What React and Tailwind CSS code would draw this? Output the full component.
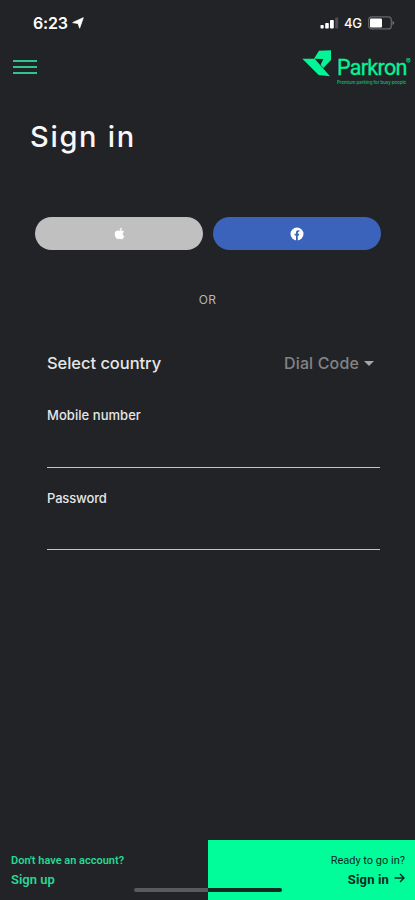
// src/App.jsx

import React, { useState } from 'react';
import { FaApple } from 'react-icons/fa';

const StatusBar = () => (
	<div className="flex h-[46px] items-center justify-between pl-[33px] pr-[20px] text-white">
		<div className="flex items-center gap-[4px]">
			<span className="w-[35px] whitespace-nowrap text-[16px] font-semibold leading-none tracking-[-0.2px]">6:23</span>
			<svg className="h-[12px] w-[12px]" viewBox="0 0 12 12" fill="currentColor">
				<path d="M11.3 0.7 L7.6 11.2 L6.2 6.6 L0.7 5.6 Z" stroke="currentColor" strokeWidth="0.8" strokeLinejoin="round" />
			</svg>
		</div>
		<div className="flex items-center">
			<svg className="h-[12px] w-[19px]" viewBox="0 0 19 12" fill="currentColor">
				<rect x="0.5" y="8" width="3.2" height="3.5" rx="0.8" />
				<rect x="5.2" y="6" width="3.6" height="5.5" rx="0.8" />
				<rect x="10" y="3" width="3.8" height="8.5" rx="0.8" />
				<rect x="15.2" y="0.5" width="3" height="11" rx="0.8" opacity="0.2" />
			</svg>
			<span className="ml-[5px] w-[18px] whitespace-nowrap text-[13px] font-medium leading-none tracking-[-0.2px]">4G</span>
			<svg className="ml-[6px] h-[14px] w-[27px]" viewBox="0 0 27 14" fill="none">
				<rect x="0.7" y="0.9" width="22.6" height="12" rx="3" stroke="#66676a" strokeWidth="1.2" />
				<rect x="2" y="2.4" width="12" height="9" rx="1.2" fill="#fff" />
				<path d="M24.5 4.5 L26.4 7 L24.5 9.5 Z" fill="#77787b" />
			</svg>
		</div>
	</div>
);

const Logo = () => (
	<div className="flex text-[#04f597]">
		<svg className="h-[27px] w-[30px] shrink-0" viewBox="0 0 90 81" fill="currentColor">
			<path d="M1 26 L38 26 L84 79 L50 75 Z" />
			<path d="M36 26 L51 2 L87 1 L87 30 L64 54 L56 44 L64 27 Z" />
		</svg>
		<div className="ml-[5px] mt-[5px] w-[77px]">
			<div className="flex whitespace-nowrap">
				<span className="w-[68px] text-[21.5px] leading-[26px] tracking-[-0.7px] [font-family:Roboto,sans-serif] [-webkit-text-stroke:0.3px_currentColor]">Parkron</span>
				<span className="ml-[1px] mt-[3px] text-[7px] leading-[7px]">®</span>
			</div>
			<p className="whitespace-nowrap text-[4.4px] font-medium leading-[4px] tracking-[-0.02px] opacity-70">Premium parking for busy people</p>
		</div>
	</div>
);

const App = () => {
	const [mobile, setMobile] = useState('');
	const [password, setPassword] = useState('');

	return (
		<div className="flex h-[900px] w-[415px] flex-col overflow-hidden bg-[#222327] [font-family:Inter,sans-serif]">
			<StatusBar />

			{/* Header */}
			<header className="flex h-[60px] items-start justify-between pl-[13px]">
				<button className="mt-[14px] flex w-[24px] flex-col gap-[4px]" aria-label="Menu">
					<span className="h-[2px] w-full bg-[#2fc58d]"></span>
					<span className="h-[2px] w-full bg-[#2fc58d]"></span>
					<span className="h-[2px] w-full bg-[#2fc58d]"></span>
				</button>
				<div className="mt-[4px] w-[113px]">
					<Logo />
				</div>
			</header>

			<main className="flex flex-1 flex-col">
				<h1 className="ml-[30px] mt-[11px] text-[29px] font-medium leading-[40px] tracking-[1.7px] text-[#f7f7f7]">Sign in</h1>

				{/* Social login */}
				<div className="ml-[35px] mt-[60px] flex gap-[10px]">
					<button className="flex h-[33px] w-[168px] items-center justify-center rounded-full bg-[#c0c0c0] text-white" aria-label="Apple">
						<FaApple className="h-[13px] w-[13px]" />
					</button>
					<button className="flex h-[33px] w-[168px] items-center justify-center rounded-full bg-[#3b63bb]" aria-label="Facebook">
						<svg className="h-[14px] w-[14px]" viewBox="0 0 14 14">
							<circle cx="7" cy="7" r="6.5" fill="#fff" />
							<path d="M6 14 V8.6 H4.6 V6.8 H6 V5.6 C6 3.9 7 3.1 9.3 3.3 V4.8 C8.1 4.8 7.8 5 7.8 5.8 V6.8 H9.2 L9 8.6 H7.8 V14 Z" fill="#3b63bb" />
						</svg>
					</button>
				</div>

				<p className="mt-[42px] text-center text-[12px] leading-[16px] tracking-[0.3px] text-[#b4b5b7]">OR</p>

				{/* Form */}
				<form className="ml-[47px] mt-[43px] w-[333px] text-[#e6e6e6]">
					<div className="flex h-[24px] items-center justify-between pr-[6px]">
						<span className="text-[16.5px] font-medium tracking-[-0.05px]">Select country</span>
						<button type="button" className="flex items-center gap-[5px] text-[16px] font-medium tracking-[0.15px] text-[#828386]">
							Dial Code
							<svg className="h-[5px] w-[10px]" viewBox="0 0 10 5" fill="#a5a6a8">
								<path d="M0 0 H10 L5 5 Z" />
							</svg>
						</button>
					</div>
					<label className="mt-[30px] block">
						<span className="block text-[13px] font-medium leading-[20px] tracking-[0.05px]">Mobile number</span>
						<input
							className="block h-[43px] w-full border-b border-[#c4c5c8] bg-transparent outline-none"
							value={mobile}
							onChange={(e) => setMobile(e.target.value)}
						/>
					</label>
					<label className="mt-[20px] block">
						<span className="block text-[13px] font-medium leading-[20px] tracking-[-0.15px]">Password</span>
						<input
							type="password"
							className="block h-[42px] w-full border-b border-[#c4c5c8] bg-transparent outline-none"
							value={password}
							onChange={(e) => setPassword(e.target.value)}
						/>
					</label>
				</form>
			</main>

			{/* Bottom actions */}
			<footer className="relative flex h-[60px] [font-family:Roboto,sans-serif]">
				<button className="flex w-[208px] flex-col items-start pl-[11px] pt-[13px] text-[#25d994]">
					<span className="text-[11px] font-semibold leading-[16px]">Don't have an account?</span>
					<span className="mt-[2px] text-[13px] font-semibold leading-[18px]">Sign up</span>
				</button>
				<button className="flex w-[207px] flex-col items-end bg-[#00fd9a] pr-[10px] pt-[13px] text-[#0b2a20]">
					<span className="text-[11px] leading-[16px]">Ready to go in?</span>
					<span className="mt-[2px] flex gap-[5px] text-[13px] font-bold leading-[18px] tracking-[0.15px]">
						Sign in
						<svg className="mt-[2px] h-[10px] w-[11px]" viewBox="0 0 11 10" fill="none" stroke="currentColor" strokeWidth="1.4">
							<path d="M0.5 5 H10 M6 1 L10 5 L6 9" />
						</svg>
					</span>
				</button>
				<div className="absolute left-[134px] top-[48px] flex h-[4px] w-[148px] overflow-hidden rounded-full">
					<span className="w-[74px] bg-[#5a5a5c]"></span>
					<span className="w-[74px] bg-[#102c22]"></span>
				</div>
			</footer>
		</div>
	);
};

export default App;
